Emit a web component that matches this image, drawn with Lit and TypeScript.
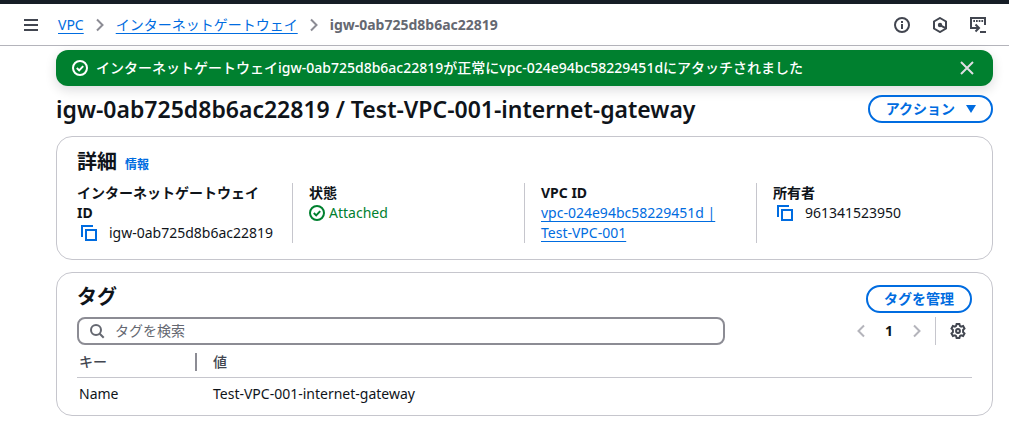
import { LitElement, html, svg, css } from "lit";
import { customElement } from "lit/decorators.js";

const icon = (body: unknown, cls = "") => html`
  <svg class="icon ${cls}" viewBox="0 0 16 16" width="16" height="16" aria-hidden="true">${body}</svg>
`;

const menuIcon = svg`<path d="M1 3h14M1 8h14M1 13h14" />`;
const chevronRight = svg`<path d="M5 2.5l5.5 5.5L5 13.5" />`;
const chevronLeft = svg`<path d="M11 2.5L5.5 8l5.5 5.5" />`;
const infoIcon = svg`<circle cx="8" cy="8" r="7" /><path d="M8 12V7M8 4v2" />`;
const hexIcon = svg`<path d="M8 1l6 3.5v7L8 15l-6-3.5v-7z" /><circle class="solid" cx="8" cy="8" r="2.2" /><path d="M8.500 8.300l5 2.800" />`;
const shellIcon = svg`<path d="M1 11V1h14v7M3.300 4h1.700M6 4h1.700M8.700 4h1.700M11.400 4h1.700M0 11h8M5.500 7.500L9 11l-3.500 3.500M10 15h6" />`;
const checkIcon = svg`<circle cx="8" cy="8" r="7" /><path d="M4.800 8l2.400 2.400 4-4.300" />`;
const closeIcon = svg`<path d="M2 2l12 12M14 2L2 14" />`;
const copyIcon = svg`<path d="M1 12V1h11" /><path d="M5 5h10v10H5z" />`;
const searchIcon = svg`<circle cx="7" cy="7" r="5" /><path d="M10.700 10.700l4 4" />`;
const gearIcon = svg`<path d="M6.600 1h2.800l.5 1.900 1.200.7 2-.6 1.400 2.500-1.400 1.400v2.200l1.400 1.400-1.400 2.500-2-.6-1.200.7-.5 1.900H6.600l-.5-1.900-1.200-.7-2 .6L1.500 10.500l1.400-1.400V6.900L1.500 5.500 2.900 3l2 .6 1.200-.7z" /><circle cx="8" cy="8" r="1.900" />`;

@customElement("app-root")
export class AppRoot extends LitElement {
  static styles = css`
    :host {
      display: block;
      color: #0f141a;
      background: #fff;
      font: 14px/20px "Noto Sans", "Noto Sans CJK JP", sans-serif;
    }
    * { box-sizing: border-box; }
    h1, h2, dl, dd, ol { margin: 0; padding: 0; }
    button {
      font: inherit;
      color: inherit;
      background: none;
      border: 0;
      padding: 0;
      cursor: pointer;
    }
    a { color: #006ce0; text-underline-offset: 3px; }
    .icon {
      display: block;
      flex: none;
      fill: none;
      stroke: currentColor;
      stroke-width: 2;
    }
    .solid { fill: currentColor; stroke: none; }
    .masthead { height: 4px; background: #161d26; }
    .topbar {
      display: flex;
      align-items: center;
      gap: 19px;
      height: 42px;
      padding: 0 23px;
      border-bottom: 1px solid #b4b4bb;
      color: #424650;
    }
    .crumbs { flex: 1; }
    .crumbs ol { display: flex; list-style: none; }
    .crumbs li { display: flex; align-items: center; }
    .crumbs .sep { color: #8c8c94; margin: 0 8px; }
    .current { font-weight: 700; color: #656871; }
    .tools { display: flex; gap: 22px; }
    .page { padding: 4px 16px 5px 56px; }
    .flash {
      display: flex;
      align-items: center;
      gap: 8px;
      height: 36px;
      padding: 0 18px 0 16px;
      border-radius: 12px;
      background: #00802f;
      color: #fff;
      box-shadow: 0 4px 12px rgba(0, 7, 22, 0.14);
    }
    .flash button { color: #dedee3; }
    .flash-text { flex: 1; font-weight: 500; }
    .title {
      display: flex;
      align-items: center;
      justify-content: space-between;
      padding: 9px 0 13px;
    }
    h1 { font-size: 23px; line-height: 28px; font-weight: 600; }
    h2 { font-size: 20px; line-height: 24px; }
    .btn {
      display: flex;
      align-items: center;
      gap: 8px;
      height: 28px;
      padding: 0 16px;
      border: 2px solid #006ce0;
      border-radius: 14px;
      color: #006ce0;
      font-weight: 700;
    }
    .btn.menu { padding-right: 12px; }
    .btn .icon { fill: currentColor; stroke: none; }
    .card {
      padding: 12px 20px;
      border: 1px solid #c6c6cd;
      border-radius: 16px;
    }
    .card + .card { margin-top: 12px; }
    .details { padding: 13px 20px 16px; }
    .details-head { display: flex; align-items: baseline; gap: 8px; margin-bottom: 9px; }
    .info { font-size: 12px; line-height: 16px; font-weight: 700; text-decoration: none; }
    .fields { display: flex; gap: 16px; }
    .field { flex: 1 1 0; box-sizing: content-box; min-width: 0; }
    .field + .field { border-left: 1px solid #c6c6cd; padding-left: 16px; }
    dt { font-weight: 700; }
    .copy { display: flex; align-items: center; gap: 12px; padding-left: 4px; }
    .copy button { color: #006ce0; }
    .status { display: flex; align-items: center; gap: 4px; color: #00802f; }
    .row { display: flex; align-items: center; justify-content: space-between; }
    .row h2 { align-self: flex-start; }
    .filter { margin-top: 4px; }
    .search {
      display: flex;
      align-items: center;
      gap: 10px;
      flex: 0 1 648px;
      height: 28px;
      padding: 0 10px;
      border: 2px solid #8c8c94;
      border-radius: 8px;
      color: #656871;
    }
    .search input {
      flex: 1;
      min-width: 0;
      font: inherit;
      line-height: 20px;
      border: 0;
      padding: 0;
      outline: 0;
      background: none;
    }
    .search input::placeholder { color: #656871; opacity: 1; }
    .pager { display: flex; align-items: center; }
    .pager .arrow { color: #b4b4bb; }
    .page-no { width: 40px; text-align: center; font-weight: 700; }
    .prefs {
      display: flex;
      align-items: center;
      height: 28px;
      margin-left: 10px;
      padding: 0 6px 0 14px;
      border-left: 1px solid #c6c6cd;
      color: #424650;
    }
    table { width: 100%; border-collapse: collapse; table-layout: fixed; }
    th, td { text-align: left; padding: 0 0 0 2px; height: 34px; }
    th { height: 32px; padding-top: 3px; font-weight: 500; color: #424650; border-bottom: 1px solid #c6c6cd; }
    .key { width: 134px; }
    .key-head {
      display: block;
      width: 118px;
      height: 18px;
      line-height: 18px;
      border-right: 2px solid #8c8c94;
    }
    .tags { padding-bottom: 4px; }
  `;

  render() {
    return html`
      <div class="masthead"></div>
      <header class="topbar">
        <button aria-label="メニュー">${icon(menuIcon)}</button>
        <nav class="crumbs">
          <ol>
            <li><a href="#vpc">VPC</a>${icon(chevronRight, "sep")}</li>
            <li><a href="#igws">インターネットゲートウェイ</a>${icon(chevronRight, "sep")}</li>
            <li class="current">igw-0ab725d8b6ac22819</li>
          </ol>
        </nav>
        <div class="tools">
          <button aria-label="情報">${icon(infoIcon)}</button>
          <button aria-label="リソース">${icon(hexIcon)}</button>
          <button aria-label="CloudShell">${icon(shellIcon)}</button>
        </div>
      </header>
      <main class="page">
        <div class="flash" role="status">
          ${icon(checkIcon)}
          <span class="flash-text">インターネットゲートウェイigw-0ab725d8b6ac22819が正常にvpc-024e94bc58229451dにアタッチされました</span>
          <button aria-label="閉じる">${icon(closeIcon)}</button>
        </div>
        <div class="title">
          <h1>igw-0ab725d8b6ac22819 / Test-VPC-001-internet-gateway</h1>
          <button class="btn menu">アクション${icon(svg`<path d="M3 4h10l-5 8z" />`)}</button>
        </div>
        <section class="card details">
          <div class="details-head">
            <h2>詳細</h2>
            <a class="info" href="#info">情報</a>
          </div>
          <dl class="fields">
            <div class="field">
              <dt>インターネットゲートウェイ ID</dt>
              <dd class="copy"><button aria-label="コピー">${icon(copyIcon)}</button>igw-0ab725d8b6ac22819</dd>
            </div>
            <div class="field">
              <dt>状態</dt>
              <dd class="status">${icon(checkIcon)}Attached</dd>
            </div>
            <div class="field">
              <dt>VPC ID</dt>
              <dd><a href="#vpc-detail">vpc-024e94bc58229451d | Test-VPC-001</a></dd>
            </div>
            <div class="field">
              <dt>所有者</dt>
              <dd class="copy"><button aria-label="コピー">${icon(copyIcon)}</button>961341523950</dd>
            </div>
          </dl>
        </section>
        <section class="card tags">
          <div class="row">
            <h2>タグ</h2>
            <button class="btn">タグを管理</button>
          </div>
          <div class="row filter">
            <label class="search">
              ${icon(searchIcon)}
              <input type="search" placeholder="タグを検索" aria-label="タグを検索" />
            </label>
            <div class="pager">
              <button class="arrow" aria-label="前へ">${icon(chevronLeft)}</button>
              <span class="page-no">1</span>
              <button class="arrow" aria-label="次へ">${icon(chevronRight)}</button>
              <div class="prefs"><button aria-label="設定">${icon(gearIcon)}</button></div>
            </div>
          </div>
          <table>
            <thead>
              <tr>
                <th class="key" scope="col"><span class="key-head">キー</span></th>
                <th scope="col">値</th>
              </tr>
            </thead>
            <tbody>
              <tr><td>Name</td><td>Test-VPC-001-internet-gateway</td></tr>
            </tbody>
          </table>
        </section>
      </main>
    `;
  }
}
